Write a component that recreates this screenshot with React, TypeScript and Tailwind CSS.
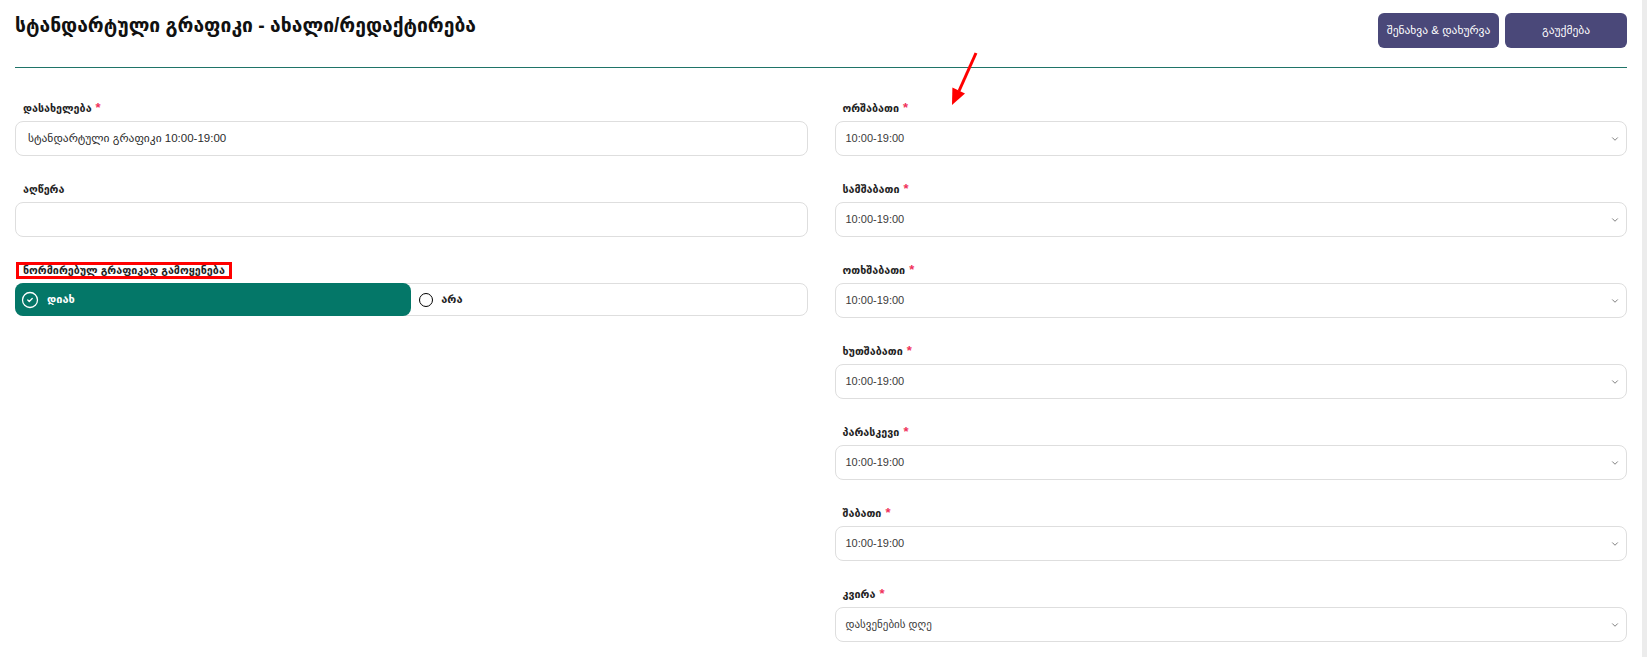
import { ChevronDown, CircleCheck } from 'lucide-react';

const days = [
  { label: 'ორშაბათი', value: '10:00-19:00' },
  { label: 'სამშაბათი', value: '10:00-19:00' },
  { label: 'ოთხშაბათი', value: '10:00-19:00' },
  { label: 'ხუთშაბათი', value: '10:00-19:00' },
  { label: 'პარასკევი', value: '10:00-19:00' },
  { label: 'შაბათი', value: '10:00-19:00' },
  { label: 'კვირა', value: 'დასვენების დღე' },
];

function Label({ text, required }: { text: string; required?: boolean }) {
  return (
    <div className="flex h-4 items-center pl-2 text-[10.75px] font-bold leading-4 text-[#1f1f1f]">
      {text}
      {required && <span className="ml-1 text-[13px] text-[#f0325a]">*</span>}
    </div>
  );
}

function Field({ label, required, value }: { label: string; required?: boolean; value?: string }) {
  return (
    <div className="mb-[25px] flex flex-col">
      <Label text={label} required={required} />
      <div className="mt-[5px] flex h-[35px] items-center rounded-lg border border-[#dedede] px-3 text-[11.5px] text-[#2b2b2b]">
        {value}
      </div>
    </div>
  );
}

function SelectField({ label, value }: { label: string; value: string }) {
  return (
    <div className="mb-[25px] flex flex-col">
      <Label text={label} required />
      <div className="mt-[5px] flex h-[35px] items-center justify-between rounded-lg border border-[#dedede] pl-[10px] pr-[6px] text-[11px] text-[#3a3a3a]">
        <span>{value}</span>
        <ChevronDown size={10} strokeWidth={2} className="text-[#666]" />
      </div>
    </div>
  );
}

export default function App() {
  return (
    <div className="flex h-[657px] w-full overflow-hidden bg-white font-['Liberation_Sans','DejaVu_Sans',sans-serif]">
      <main className="relative flex-1 px-[15px]">
        <header className="flex items-start justify-between border-b border-[#1f7468] pb-[19px] pt-[13px]">
          <h1 className="text-[19.3px] font-bold leading-[26px] text-[#111]">
            სტანდარტული გრაფიკი - ახალი/რედაქტირება
          </h1>
          <div className="flex gap-[6px]">
            <button className="h-[35px] w-[121px] rounded-md bg-[#4a4879] text-[11.5px] text-white">
              შენახვა &amp; დახურვა
            </button>
            <button className="h-[35px] w-[122px] rounded-md bg-[#4a4879] text-[11.5px] text-white">
              გაუქმება
            </button>
          </div>
        </header>

        <div className="grid grid-cols-2 gap-x-[27px] pt-[32px]">
          <div className="flex flex-col">
            <Field label="დასახელება" required value="სტანდარტული გრაფიკი 10:00-19:00" />
            <Field label="აღწერა" />
            <div className="flex flex-col">
              <div className="ml-px self-start border-[3px] border-[#ff0000] px-1 text-[10.75px] font-bold leading-[11px] text-[#1f1f1f]">
                ნორმირებულ გრაფიკად გამოყენება
              </div>
              <div className="mt-1 grid h-[33px] grid-cols-2 rounded-lg border border-[#dedede]">
                <div className="-my-px -ml-px flex items-center gap-[8px] rounded-lg bg-[#047768] pl-[6px] text-[11px] font-bold text-white">
                  <CircleCheck size={18} strokeWidth={1.7} />
                  დიახ
                </div>
                <div className="flex items-center gap-[8px] pl-[8px] text-[11px] font-bold text-[#1f1f1f]">
                  <span className="h-[14px] w-[14px] rounded-full border-[1.5px] border-black" />
                  არა
                </div>
              </div>
            </div>
          </div>

          <div className="flex flex-col">
            {days.map((d) => (
              <SelectField key={d.label} label={d.label} value={d.value} />
            ))}
          </div>
        </div>

        <svg
          className="pointer-events-none absolute left-0 top-0"
          width="1642"
          height="657"
          viewBox="0 0 1642 657"
        >
          <line x1="976" y1="53" x2="959" y2="91" stroke="#ff0000" strokeWidth="3" />
          <polygon points="952,105 965,93.4 952.4,87.6" fill="#ff0000" />
        </svg>
      </main>
      <div className="w-[5px] bg-[#ececec]" />
    </div>
  );
}
